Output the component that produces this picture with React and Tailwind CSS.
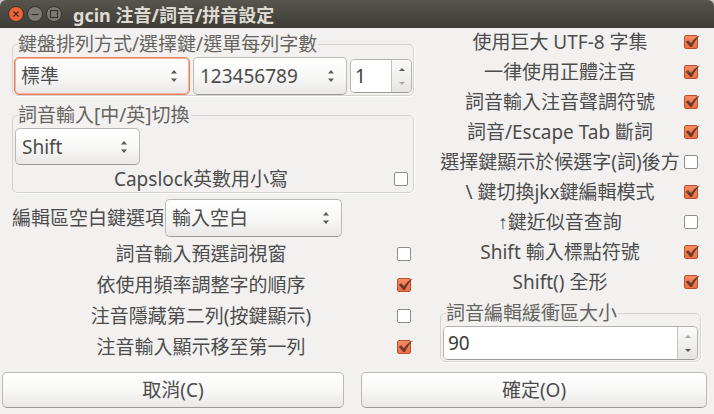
import React, { useId, useState } from "react";

function Arrows({ className }) {
  return (
    <svg className={className} width="8" height="14" viewBox="0 0 8 14" aria-hidden="true">
      <path d="M4 1 7 4.500H1z" fill="#5a5955" />
      <path d="M4 13 1 9.500h6z" fill="#5a5955" />
    </svg>
  );
}

function Combo({ label, id, options, focused, className }) {
  return (
    <div className={`relative ${className}`}>
      <select
        id={id}
        aria-label={label}
        className={`h-full w-full appearance-none rounded-[5px] border bg-linear-to-b from-white via-[#f8f8f7] to-[#e9e8e6] pl-1.5 pr-6 outline-none ${
          focused
            ? "border-[#e9805c] shadow-[inset_0_0_0_1px_#f3b39c]"
            : "border-[#bcbab6] border-b-[#9d9b97] shadow-[inset_0_1px_0_#fff]"
        }`}
      >
        {options.map((o) => (
          <option key={o}>{o}</option>
        ))}
      </select>
      <Arrows className="pointer-events-none absolute right-3 top-1/2 -translate-y-1/2" />
    </div>
  );
}

function Spin({ label, initial, min, max, className }) {
  const [value, setValue] = useState(initial);
  const step = (d) => setValue((v) => Math.min(max, Math.max(min, v + d)));
  return (
    <div
      className={`flex overflow-hidden rounded-[5px] border border-[#b4b2ae] border-b-[#9d9b97] bg-white ${className}`}
    >
      <input
        type="text"
        inputMode="numeric"
        aria-label={label}
        value={value}
        onChange={(e) => setValue(Number(e.target.value) || 0)}
        className="w-0 min-w-0 flex-1 bg-white px-1 text-[#3c3b37] outline-none"
      />
      <div className="flex w-5 flex-col border-l border-[#c4c2be] bg-linear-to-b from-[#fafafa] to-[#e6e5e3] py-0.5">
        <button
          type="button"
          aria-label="增加"
          onClick={() => step(1)}
          className={`flex flex-1 items-center justify-center ${value >= max ? "text-[#aaa8a4]" : "text-[#5a5955]"}`}
        >
          <svg width="6" height="3" viewBox="0 0 6 3">
            <path d="M3 0 6 3H0z" fill="currentColor" />
          </svg>
        </button>
        <button
          type="button"
          aria-label="減少"
          onClick={() => step(-1)}
          className={`flex flex-1 items-center justify-center ${value <= min ? "text-[#aaa8a4]" : "text-[#5a5955]"}`}
        >
          <svg width="6" height="3" viewBox="0 0 6 3">
            <path d="M3 3 0 0h6z" fill="currentColor" />
          </svg>
        </button>
      </div>
    </div>
  );
}

function CheckRow({ label, checked, className }) {
  const id = useId();
  return (
    <div className={`flex items-center ${className}`}>
      <label htmlFor={id} className="flex-1 whitespace-nowrap text-center">
        {label}
      </label>
      <span className="relative size-3.5 shrink-0">
        <input
          id={id}
          type="checkbox"
          defaultChecked={checked}
          className="peer block size-3.5 appearance-none rounded-[2px] border border-[#8f8d89] bg-white checked:border-[#b9532f] checked:bg-linear-to-b checked:from-[#f58b63] checked:to-[#ee6f42]"
        />
        <svg
          className="pointer-events-none absolute left-0 top-0 hidden overflow-visible peer-checked:block"
          width="16"
          height="14"
          viewBox="0 0 16 14"
        >
          <path
            d="M1.800 6.800 4.200 5.200 7 8.300C9 5.200 11.800 2.300 16 0.600 12.600 3.900 10.200 7.500 7.900 12H6.300z"
            fill="#6b3a2a"
          />
        </svg>
      </span>
    </div>
  );
}

function Frame({ title, className, children }) {
  return (
    <fieldset
      className={`min-w-0 rounded-[5px] border border-[#d5d3d0] px-px shadow-[0_1px_0_#fff,1px_0_0_#fff] ${className}`}
    >
      <legend className="ml-1 whitespace-nowrap pr-px leading-5 text-[#65645f]">{title}</legend>
      {children}
    </fieldset>
  );
}

function TitleBar() {
  return (
    <header className="flex h-7 items-center gap-[3px] rounded-t-[6px] bg-linear-to-b from-[#57554c] to-[#3d3c38] pl-2">
      <button type="button" aria-label="關閉" className="size-4">
        <svg width="16" height="16" viewBox="0 0 16 16">
          <circle cx="8" cy="8" r="7.500" fill="#ee6336" stroke="#34332e" />
          <path d="M5.500 5.500l5 5M10.500 5.500l-5 5" stroke="#3f2a20" strokeWidth="1.300" />
        </svg>
      </button>
      <button type="button" aria-label="最小化" className="size-4">
        <svg width="16" height="16" viewBox="0 0 16 16">
          <circle cx="8" cy="8" r="7.500" fill="#7d7b73" stroke="#34332e" />
          <path d="M4.500 8.500h7" stroke="#34332e" strokeWidth="1.200" />
        </svg>
      </button>
      <button type="button" aria-label="最大化" className="size-4">
        <svg width="16" height="16" viewBox="0 0 16 16">
          <circle cx="8" cy="8" r="7.500" fill="#7d7b73" stroke="#34332e" />
          <rect x="4.500" y="4.500" width="7" height="7" fill="none" stroke="#34332e" strokeWidth="1.200" />
        </svg>
      </button>
      <h1 className="pl-2 pt-0.5 text-[18px] font-bold leading-7 text-[#dfdbd2]">gcin 注音/詞音/拼音設定</h1>
    </header>
  );
}

const leftOptions = [
  ["詞音輸入預選詞視窗", false],
  ["依使用頻率調整字的順序", true],
  ["注音隱藏第二列(按鍵顯示)", false],
  ["注音輸入顯示移至第一列", true],
];

const upKeyLabel = (
  <>
    <span className="font-['Liberation_Sans',sans-serif]">↑</span>鍵近似音查詢
  </>
);

const rightOptions = [
  ["使用巨大 UTF-8 字集", true],
  ["一律使用正體注音", true],
  ["詞音輸入注音聲調符號", true],
  ["詞音/Escape Tab 斷詞", true],
  ["選擇鍵顯示於候選字(詞)後方", false],
  ["\\ 鍵切換jkx鍵編輯模式", true],
  [upKeyLabel, false],
  ["Shift 輸入標點符號", true],
  ["Shift() 全形", true],
];

const buttonStyle =
  "h-9 rounded-[5px] border border-[#bcbab6] border-b-[#9d9b97] bg-linear-to-b from-white via-[#f8f8f7] to-[#e9e8e6]";

export default function App() {
  return (
    <div className="min-h-screen bg-[#c9c8c6] font-['Noto_Sans','Noto_Sans_CJK_TC',sans-serif] text-[19px] leading-6 text-[#4c4c4c]">
      <TitleBar />
      <form
        onSubmit={(e) => e.preventDefault()}
        className="min-h-[calc(100vh-28px)] bg-[#f2f1f0]"
      >
        <div className="grid grid-cols-[402fr_261fr] gap-x-[26px] pl-3 pr-[13px]">
          <div className="min-w-0 pt-1.5">
            <Frame title="鍵盤排列方式/選擇鍵/選單每列字數">
              <div className="flex items-center gap-[3px] pt-[3px]">
                <Combo label="鍵盤排列方式" options={["標準"]} focused className="h-[38px] flex-[176]" />
                <Combo label="選擇鍵" options={["123456789"]} className="h-[38px] flex-[154]" />
                <Spin label="選單每列字數" initial={1} min={1} max={10} className="h-[34px] w-[62px]" />
              </div>
            </Frame>
            <Frame title="詞音輸入[中/英]切換" className="mt-[9px]">
              <div className="pl-px pt-[3px]">
                <Combo label="中英切換" options={["Shift"]} className="h-[37px] w-[125px]" />
              </div>
              <CheckRow label="Capslock英數用小寫" className="h-[27px] gap-1.5 pr-1" />
            </Frame>
            <div className="flex items-center gap-px pt-1.5">
              <label htmlFor="space-key" className="whitespace-nowrap">
                編輯區空白鍵選項
              </label>
              <Combo id="space-key" options={["輸入空白"]} className="h-[38px] w-[177px]" />
            </div>
            <div className="pt-px">
              {leftOptions.map(([label, checked]) => (
                <CheckRow key={label} label={label} checked={checked} className="h-[31px] gap-[7px] pr-[3px]" />
              ))}
            </div>
          </div>
          <div className="min-w-0">
            {rightOptions.map(([label, checked], i) => (
              <CheckRow key={i} label={label} checked={checked} className="h-[30px] gap-1 pb-0.5 pr-[3px]" />
            ))}
            <Frame title="詞音編輯緩衝區大小" className="mt-[5px]">
              <div className="px-px pb-px pt-[3px]">
                <Spin label="詞音編輯緩衝區大小" initial={90} min={10} max={90} className="h-[34px]" />
              </div>
            </Frame>
          </div>
        </div>
        <div className="flex gap-[17px] pb-1.5 pl-0.5 pr-[7px] pt-2.5">
          <button type="button" className={`flex-[342] ${buttonStyle}`}>
            取消(C)
          </button>
          <button type="submit" className={`flex-[346] ${buttonStyle}`}>
            確定(O)
          </button>
        </div>
      </form>
    </div>
  );
}
